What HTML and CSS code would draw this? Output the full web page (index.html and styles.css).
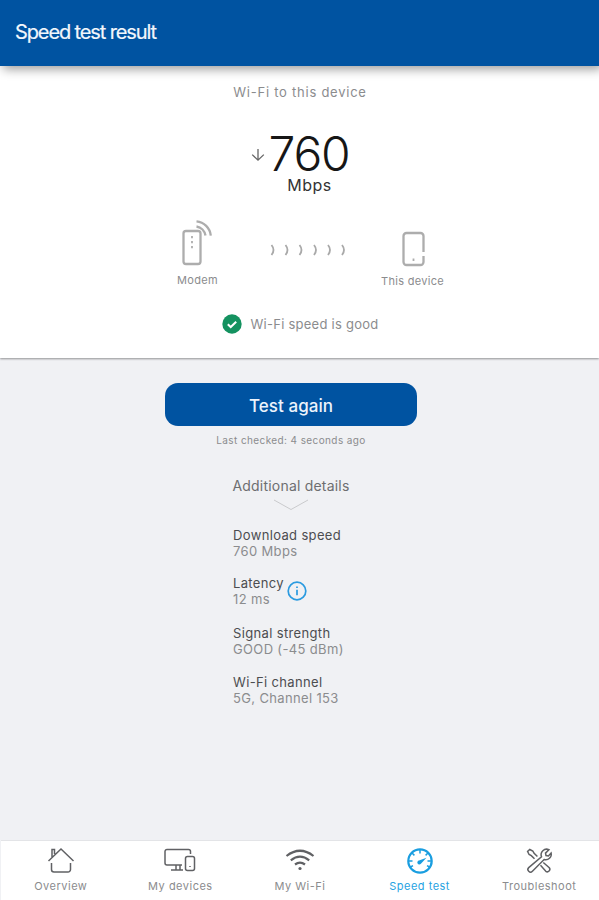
FILE: index.html
```html
<!DOCTYPE html>
<html lang="en">

<head>
  <meta charset="UTF-8" />
  <meta name="viewport" content="width=device-width, initial-scale=1.0" />
  <title>Speed test result</title>
  <link rel="stylesheet" href="styles.css">
</head>

<body>
  <header class="header">
    <h1>Speed test result</h1>
  </header>

  <section class="result">
    <h2>Wi-Fi to this device</h2>
    <div class="speed">
      <svg class="arrow" width="14" height="14" viewBox="0 0 14 14">
        <path d="M7 1v11M1.2 6.6 7 12.2l5.8-5.6" />
      </svg>
      <span class="number">760</span>
    </div>
    <p class="unit">Mbps</p>

    <div class="route">
      <div class="point modem">
        <svg width="36" height="48" viewBox="0 0 36 48">
          <rect x="4.5" y="12" width="17" height="33" rx="2.5" />
          <path d="M17.5 7.5a11 11 0 0 1 9 9M17.5 2.3a16 16 0 0 1 14.3 14.3" />
          <path class="lights" d="M13 17v2.2M13 22v2.2M13 27v2.2" />
        </svg>
        <span>Modem</span>
      </div>
      <svg class="waves" width="78" height="14" viewBox="0 0 78 14">
        <path d="M1.5 2q4 5 0 10M15.5 2q4 5 0 10M29.5 2q4 5 0 10M44 2q4 5 0 10M58 2q4 5 0 10M72 2q4 5 0 10" />
      </svg>
      <div class="point device">
        <svg width="24" height="36" viewBox="0 0 24 36">
          <path d="M21.5 21V5a3 3 0 0 0-3-3H4.5a3 3 0 0 0-3 3v26a3 3 0 0 0 3 3h14a3 3 0 0 0 3-3v-6" />
          <path class="lights" d="M11.5 27.5v2.5" />
        </svg>
        <span>This device</span>
      </div>
    </div>

    <div class="status">
      <svg width="20" height="20" viewBox="0 0 20 20">
        <circle cx="10" cy="10" r="9.7" />
        <path d="m5.8 10.3 2.9 2.7 5.5-5.3" />
      </svg>
      <span>Wi-Fi speed is good</span>
    </div>
  </section>

  <main class="content">
    <button class="again">Test again</button>
    <p class="checked">Last checked: 4 seconds ago</p>
    <p class="more">Additional details</p>
    <svg class="chevron" width="36" height="12" viewBox="0 0 36 12">
      <path d="M1 1l17 9.5L35 1" />
    </svg>
    <dl class="details">
      <div class="item">
        <dt>Download speed</dt>
        <dd>760 Mbps</dd>
      </div>
      <div class="item latency">
        <div>
          <dt>Latency</dt>
          <dd>12 ms</dd>
        </div>
        <svg width="20" height="20" viewBox="0 0 20 20">
          <circle cx="10" cy="10" r="8.8" />
          <path d="M10 8.8v5.4M10 5.4v1.5" />
        </svg>
      </div>
      <div class="item">
        <dt>Signal strength</dt>
        <dd>GOOD (-45 dBm)</dd>
      </div>
      <div class="item">
        <dt>Wi-Fi channel</dt>
        <dd>5G, Channel 153</dd>
      </div>
    </dl>
  </main>

  <nav class="tabs">
    <a class="tab">
      <svg width="28" height="28" viewBox="0 0 28 28">
        <path d="M1.5 14 14 2l12.5 12M5 10V2.5h2.5V7M4.5 16v6.5A2.5 2.5 0 0 0 7 25h14a2.5 2.5 0 0 0 2.5-2.5V16" />
      </svg>
      <span>Overview</span>
    </a>
    <a class="tab">
      <svg width="32" height="28" viewBox="0 0 32 28">
        <path d="M18 18H3a2 2 0 0 1-2-2V4.5a2 2 0 0 1 2-2h21.5a2 2 0 0 1 2 2V7M12 18v4.5M16 18v4.5M7 23h12" />
        <rect x="21.5" y="9.5" width="9" height="14" rx="2" />
        <path d="M26 19v1" />
      </svg>
      <span>My devices</span>
    </a>
    <a class="tab">
      <svg width="30" height="28" viewBox="0 0 30 28">
        <path class="thick" d="M1.5 9q13.5-10.5 27 0M5.8 13.3q9.2-7.2 18.4 0M10 17.5q5-3.8 10 0" />
        <circle class="dot" cx="15" cy="21.5" r="1.6" />
      </svg>
      <span>My Wi-Fi</span>
    </a>
    <a class="tab active">
      <svg width="28" height="28" viewBox="0 0 28 28">
        <circle class="thick" cx="14" cy="14" r="11.7" />
        <path d="M14 2.5v4M2.5 14h4M21.5 14h4M5.8 5.8l2.6 2.6M22.2 5.8l-2.6 2.6M4.5 20 7 18.6M23.5 20 21 18.6" />
        <path class="dot" d="m20.5 10.8-5.6 5.9a2 2 0 1 1-1.9-3.2z" />
      </svg>
      <span>Speed test</span>
    </a>
    <a class="tab">
      <svg width="28" height="28" viewBox="0 0 28 28">
        <path d="M16.5 9.7a5.5 5.5 0 0 1 7.4-7l-3.4 3.4.5 2.4 2.4.4 2.7-2.9a5.5 5.5 0 0 1-7 6.5L7.4 24.3a2.6 2.6 0 0 1-3.7-3.7z" />
        <path d="m9.5 11.8-3.2-3.1-2.2-1.2-1.5-3 2.2-2 3 1.5 1.3 2.3 3.3 3.2M18.3 15.5l6 5.3a2.5 2.5 0 0 1-3.5 3.5l-5.3-6" />
      </svg>
      <span>Troubleshoot</span>
    </a>
  </nav>
</body>

</html>
```
FILE: styles.css
```css
* {
  box-sizing: border-box;
}

body {
  display: flex;
  flex-direction: column;
  height: 900px;
  margin: 0;
  background: #f0f1f4;
  font-family: Inter, "Liberation Sans", sans-serif;
  color: #8b8c8e;
}

h1,
h2,
p,
dl,
dd {
  margin: 0;
  font-weight: 400;
}

svg {
  display: block;
  flex: none;
  fill: none;
  stroke: currentColor;
}

span,
dt,
dd {
  white-space: nowrap;
}

.header {
  z-index: 1;
  flex: none;
  height: 66px;
  padding: 20px 15px;
  background: #0053a1;
  box-shadow: 3px 3px 10px rgba(0, 0, 0, 0.4);
}

.header h1 {
  color: #f3f7fc;
  font-size: 20px;
  line-height: 24px;
  letter-spacing: -1.12px;
  -webkit-text-stroke: 0.2px;
}

.result {
  display: flex;
  flex: none;
  flex-direction: column;
  align-items: center;
  height: 292px;
  padding-top: 17px;
  background: #fff;
  box-shadow: 0 1px 2px rgba(0, 0, 0, 0.4);
}

.result h2 {
  padding-left: 1px;
  font-size: 13px;
  line-height: 18px;
  letter-spacing: 0.75px;
}

.speed {
  display: flex;
  align-items: center;
  gap: 3px;
  height: 48px;
  margin: 29px 0 0 2px;
}

.arrow {
  margin-top: 2px;
  stroke: #666;
  stroke-width: 1.3;
}

.number {
  color: #161616;
  font-size: 48px;
  font-weight: 300;
  line-height: 48px;
  letter-spacing: -1.2px;
}

.unit {
  margin-top: -2px;
  margin-left: 20px;
  color: #333;
  font-size: 16px;
  line-height: 18px;
  letter-spacing: 0.5px;
}

.route {
  display: flex;
  justify-content: space-between;
  width: 267px;
  height: 72px;
  margin: 22px 0 0 22px;
}

.point {
  display: flex;
  flex-direction: column;
  align-items: center;
  justify-content: flex-end;
  font-size: 11px;
  line-height: 14px;
  letter-spacing: 0.3px;
}

.point svg {
  stroke: #adadad;
  stroke-width: 2.3;
}

.modem {
  padding-bottom: 1px;
}

.modem svg {
  margin-bottom: 6px;
}

.device svg {
  margin: 0 0 7px 2px;
}

.point .lights {
  stroke-width: 1.8;
}

.waves {
  margin: 27px 0 0 20px;
  stroke: #a9a9a9;
  stroke-width: 1.8;
}

.status {
  display: flex;
  align-items: center;
  gap: 9px;
  height: 20px;
  margin: 26px 0 0 1px;
  font-size: 13px;
  letter-spacing: 0.25px;
}

.status circle {
  fill: #149260;
  stroke: none;
}

.status path {
  stroke: #fff;
  stroke-width: 2;
}

.content {
  display: flex;
  flex: 1;
  flex-direction: column;
  align-items: center;
  padding: 25px 17px 0 0;
}

.again {
  width: 252px;
  height: 43px;
  padding: 2px 0 0;
  border: 0;
  border-radius: 13px;
  background: #0053a1;
  color: #edf4fc;
  font-family: inherit;
  font-size: 17px;
  font-weight: 500;
  letter-spacing: 0.05px;
}

.checked {
  margin-top: 7px;
  font-size: 10px;
  line-height: 14px;
  letter-spacing: 0.4px;
}

.more {
  margin-top: 30px;
  color: #6d6e70;
  font-size: 14px;
  line-height: 18px;
  letter-spacing: 0.2px;
}

.chevron {
  margin-top: 4px;
  stroke: #c9cacc;
}

.details {
  align-self: flex-start;
  margin: 16px 0 0 233px;
  font-size: 13px;
  line-height: 16px;
  letter-spacing: 0.35px;
}

.item {
  height: 49px;
}

.item dt {
  color: #4c4d50;
}

.latency {
  display: flex;
  gap: 3px;
  margin-top: -1px;
  height: 50px;
}

.latency svg {
  margin-top: 6px;
  stroke: #2b9be0;
  stroke-width: 1.7;
}

.tabs {
  display: grid;
  flex: none;
  grid-template-columns: repeat(5, 1fr);
  height: 60px;
  margin-left: 1px;
  border-top: 1px solid #e3e4e7;
  background: #fff;
}

.tab {
  display: flex;
  flex-direction: column;
  align-items: center;
  padding-top: 6px;
  font-size: 11px;
  line-height: 14px;
  letter-spacing: 0.5px;
}

.tab svg {
  margin-bottom: 4px;
  stroke: #606164;
  stroke-width: 1.5;
}

.tab .thick {
  stroke-width: 2.2;
}

.tab .dot {
  fill: #606164;
  stroke: none;
}

.tab.active {
  color: #27a3e2;
}

.active svg {
  stroke: #1a9ee0;
}

.active .dot {
  fill: #1a9ee0;
}
```
